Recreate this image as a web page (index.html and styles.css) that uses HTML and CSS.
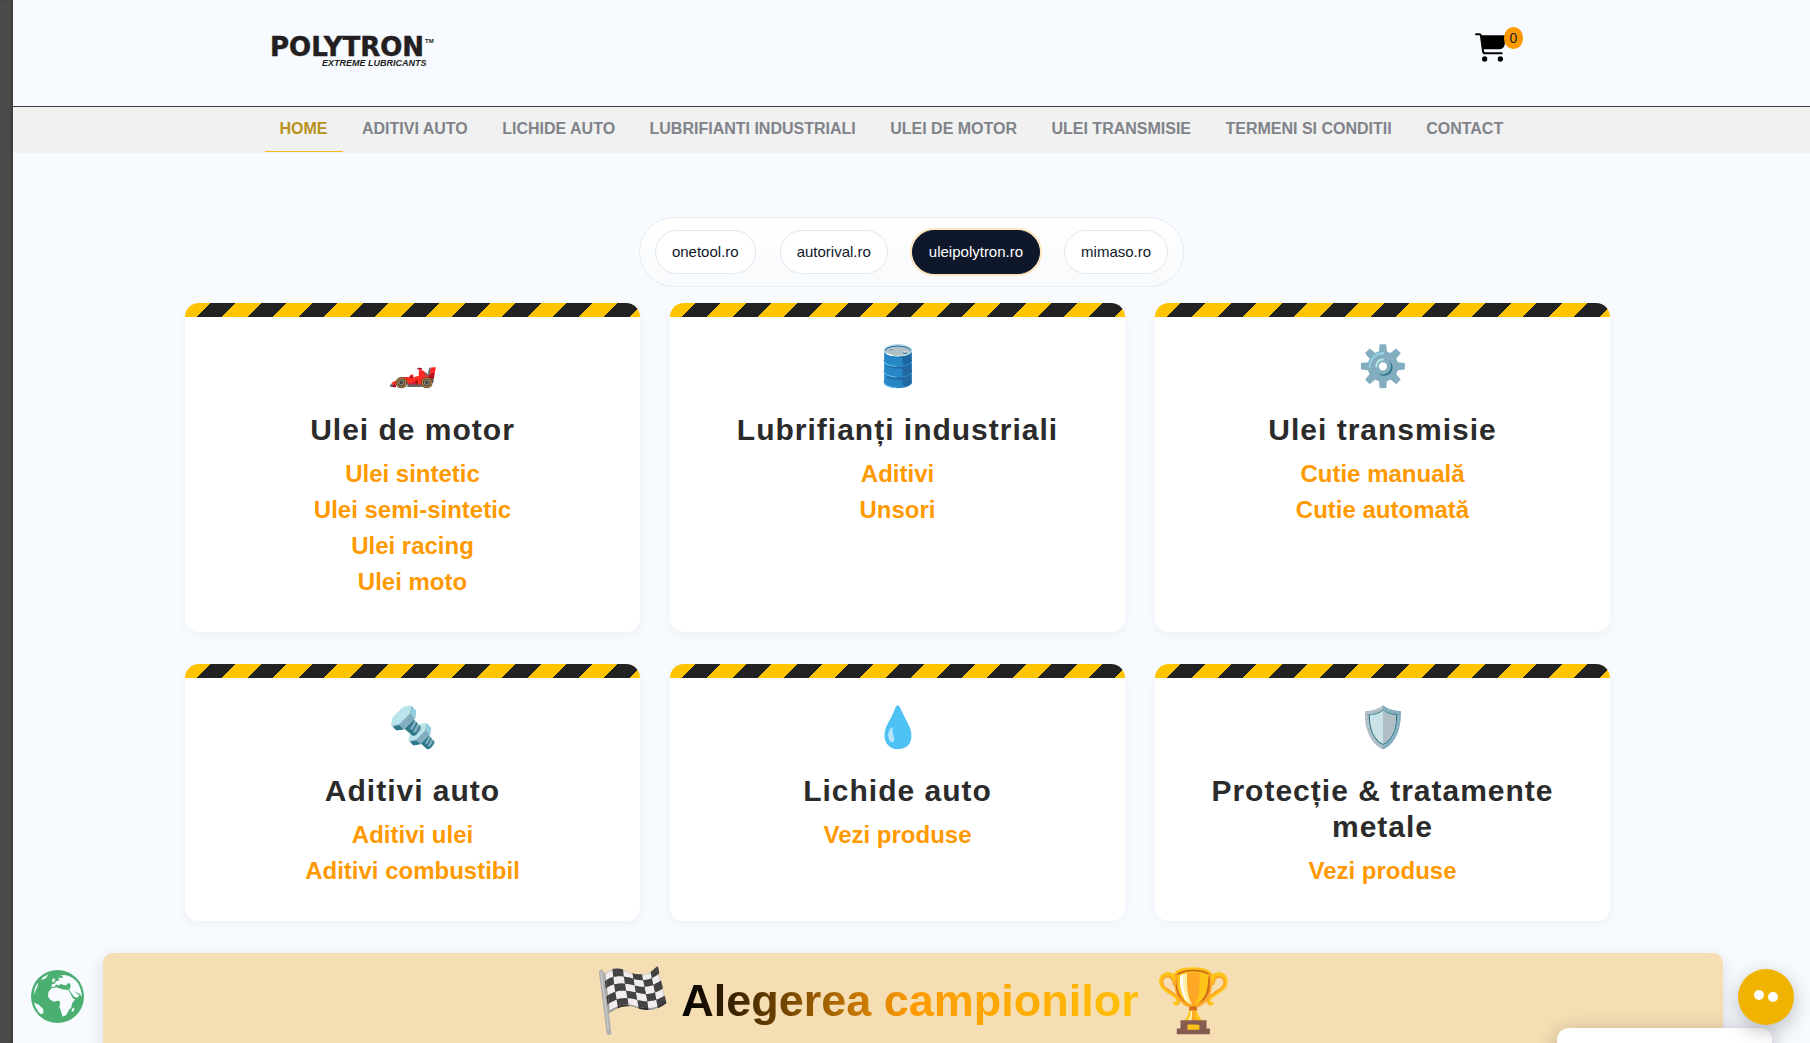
FILE: index.html
```html
<!DOCTYPE html>
<html lang="ro">
<head>
    <meta charset="UTF-8">
    <meta name="viewport" content="width=device-width, initial-scale=1.0">
    <title>Polytron - Extreme Lubricants</title>
    <link rel="stylesheet" href="styles.css">
</head>
<body>
    <div class="side-strip"></div>

    <header class="header">
        <div class="container header-row">
            <a class="logo" href="#">
                <svg width="166" height="36" viewBox="0 0 166 36" role="img" aria-label="Polytron">
                    <text class="logo-name" x="0" y="20">POLYTRON</text>
                    <text class="logo-tm" x="155" y="7">TM</text>
                    <text class="logo-sub" x="52" y="30">EXTREME LUBRICANTS</text>
                </svg>
            </a>
            <a class="cart" href="#" aria-label="Cos">
                <svg width="30" height="30" viewBox="284 98 90 90">
                    <path d="M287 102H297Q301 102 302 107L308 153Q309 159 314 159H364" fill="none" stroke="#000" stroke-width="6" stroke-linecap="round"/>
                    <path d="M301 105H375L373 134Q370 146 357 147H308Z"/>
                    <circle cx="313" cy="176" r="8"/>
                    <circle cx="360" cy="176" r="8"/>
                </svg>
                <span class="cart-count">0</span>
            </a>
        </div>
    </header>

    <nav class="nav">
        <div class="container nav-row">
            <a class="nav-link active" href="#">HOME</a>
            <a class="nav-link" href="#">ADITIVI AUTO</a>
            <a class="nav-link" href="#">LICHIDE AUTO</a>
            <a class="nav-link" href="#">LUBRIFIANTI INDUSTRIALI</a>
            <a class="nav-link" href="#">ULEI DE MOTOR</a>
            <a class="nav-link" href="#">ULEI TRANSMISIE</a>
            <a class="nav-link" href="#">TERMENI SI CONDITII</a>
            <a class="nav-link" href="#">CONTACT</a>
        </div>
    </nav>

    <main>
        <div class="sites-wrap">
            <div class="sites">
                <a class="site" href="#">onetool.ro</a>
                <a class="site" href="#">autorival.ro</a>
                <a class="site active" href="#">uleipolytron.ro</a>
                <a class="site" href="#">mimaso.ro</a>
            </div>
        </div>

        <section class="cards">
            <div class="card">
                <div class="card-icon">🏎️</div>
                <h2>Ulei de motor</h2>
                <a href="#">Ulei sintetic</a>
                <a href="#">Ulei semi-sintetic</a>
                <a href="#">Ulei racing</a>
                <a href="#">Ulei moto</a>
            </div>
            <div class="card">
                <div class="card-icon">🛢️</div>
                <h2>Lubrifianți industriali</h2>
                <a href="#">Aditivi</a>
                <a href="#">Unsori</a>
            </div>
            <div class="card">
                <div class="card-icon">⚙️</div>
                <h2>Ulei transmisie</h2>
                <a href="#">Cutie manuală</a>
                <a href="#">Cutie automată</a>
            </div>
            <div class="card">
                <div class="card-icon">🔩</div>
                <h2>Aditivi auto</h2>
                <a href="#">Aditivi ulei</a>
                <a href="#">Aditivi combustibil</a>
            </div>
            <div class="card">
                <div class="card-icon">💧</div>
                <h2>Lichide auto</h2>
                <a href="#">Vezi produse</a>
            </div>
            <div class="card">
                <div class="card-icon">🛡️</div>
                <h2>Protecție &amp; tratamente metale</h2>
                <a href="#">Vezi produse</a>
            </div>
        </section>

        <section class="banner">
            <span class="banner-icon">🏁</span>
            <h1>Alegerea campionilor</h1>
            <span class="banner-icon">🏆</span>
        </section>
    </main>

    <button class="globe" type="button" aria-label="Limba">
        <svg width="53" height="53" viewBox="92 119 160 160">
            <circle cx="172" cy="199" r="80" fill="#4caf72"/>
            <g fill="#f7faff">
                <path d="M154 170L155 162L164 160L166 154L175 151L181 150L174 147L178 142L187 144L188 138L178 136L192 134Q216 136 232 156Q243 172 246 200L238 191L229 186L223 184L232 191L238 196L231 203L222 200L211 185L207 176L212 170L210 160L203 159L198 166L190 164L182 161L175 166L168 163L162 170Z"/>
                <path d="M154 174L168 171L178 174L190 178L205 179L212 192L218 204L225 208L216 220L213 234L206 239L204 246L197 256L187 259L183 244L178 231L180 217L175 211L161 215L150 209L143 198L145 185Z"/>
                <path d="M155 150L160 143L165 147L163 153L157 156Z"/>
                <path d="M122 150L128 141L145 132L137 144Z"/>
                <path d="M102 182Q103 168 114 157L111 170L106 181L100 195Z"/>
                <path d="M101 217L115 224L129 237V250L121 252Q107 240 101 217Z"/>
                <path d="M214 242L217 235L223 232L222 241L216 246Z"/>
            </g>
        </svg>
    </button>

    <div class="chat-popup"></div>
    <button class="chat" type="button" aria-label="Chat">
        <svg width="24" height="12" viewBox="0 0 24 12">
            <circle cx="5" cy="5" r="5" fill="#fff"/>
            <circle cx="19" cy="7" r="5" fill="#fff"/>
        </svg>
    </button>
</body>
</html>
```

FILE: styles.css
```css
* {
    box-sizing: border-box;
}
body {
    margin: 0;
    padding-left: 13px;
    background: #f7faff;
    font-family: "Liberation Sans", Arial, sans-serif;
    font-size: 16px;
    line-height: 24px;
    overflow: hidden;
}
a {
    text-decoration: none;
}
.side-strip {
    position: fixed;
    top: 0;
    bottom: 0;
    left: 0;
    width: 13px;
    background: #4b4b4b;
    box-shadow: inset -2px 0 3px -1px #333;
}
.container {
    max-width: 1320px;
    margin: 0 auto;
    padding: 0 13px;
}

/* header */
.header {
    border-bottom: 1px solid #3a3d42;
}
.header-row {
    display: flex;
    justify-content: space-between;
    align-items: flex-start;
    height: 106px;
    padding: 33px 67px 0 18px;
}
.logo {
    display: block;
    padding-top: 3px;
}
.logo svg {
    display: block;
    overflow: visible;
    fill: #231f20;
}
.logo-name {
    font: bold 26px "DejaVu Sans", sans-serif;
    stroke: #231f20;
    stroke-width: 0.5px;
}
.logo-tm {
    font: bold 6px "Liberation Sans", sans-serif;
}
.logo-sub {
    font: italic bold 9px "Liberation Sans", sans-serif;
}
.cart {
    position: relative;
    color: #212529;
}
.cart svg {
    display: block;
}
.cart-count {
    position: absolute;
    left: 29px;
    top: -6px;
    padding: 0 6px;
    border-radius: 50%;
    background: #ff9900;
    font-size: 14px;
    line-height: 22px;
}

/* menu */
.nav {
    background: #f1f1f1;
}
.nav-row {
    padding-bottom: 1px;
}
.nav-link {
    display: inline-block;
    padding: 10px 15px;
    border-bottom: 1px solid transparent;
    color: #808389;
    font-weight: bold;
    vertical-align: top;
}
.nav-link.active {
    color: #b8921a;
    border-bottom-color: #f5b921;
}

/* site switcher */
.sites-wrap {
    display: flex;
    justify-content: center;
    padding: 64px 0 16px;
}
.sites {
    display: flex;
    gap: 24px;
    padding: 12px 15px;
    border: 1px solid #e6ecf2;
    border-radius: 35px;
    background: linear-gradient(#ffffff, #f8fafc);
}
.site {
    padding: 10px 16px;
    border: 1px solid #e2e8f0;
    border-radius: 22px;
    background: #fff;
    color: #0f172a;
    font-size: 15px;
    line-height: 22px;
}
.site.active {
    background: #0f172a;
    border-color: #0f172a;
    color: #fff;
    box-shadow: 0 0 0 2px #fde6c0;
}

/* categories */
.cards {
    display: grid;
    grid-template-columns: repeat(3, 1fr);
    gap: 32px 30px;
    padding: 0 200px 32px 172px;
}
.card {
    position: relative;
    overflow: hidden;
    padding: 33px 32px 32px;
    border-radius: 14px;
    background: #fff;
    box-shadow: 0 4px 12px rgba(0, 0, 0, 0.04);
    text-align: center;
}
.card::before {
    content: "";
    position: absolute;
    top: 0;
    left: 0;
    right: 0;
    height: 14px;
    background: repeating-linear-gradient(135deg, #ffc400 0 18px, #222 18px 36px);
}
.card-icon {
    margin-bottom: 16px;
    font-size: 40px;
    line-height: 60px;
}
.card h2 {
    margin: 0 0 8px;
    color: #2b2b2b;
    font-size: 30px;
    line-height: 36px;
    letter-spacing: 1px;
}
.card a {
    display: block;
    color: #ff9900;
    font-size: 24px;
    line-height: 36px;
    font-weight: bold;
}

/* champions banner */
.banner {
    display: flex;
    justify-content: center;
    align-items: center;
    height: 220px;
    margin: 0 87px 0 90px;
    padding-bottom: 124px;
    border-radius: 10px;
    background: #f5deb3;
    box-shadow: 0 4px 16px rgba(0, 0, 0, 0.12);
}
.banner h1 {
    margin: 0 16px 0 10px;
    background: linear-gradient(90deg, #000, #ff9900, #ffc107);
    -webkit-background-clip: text;
    background-clip: text;
    color: transparent;
    font-size: 45px;
    line-height: 60px;
}
.banner-icon {
    font-size: 62px;
    line-height: 72px;
}

/* floating buttons */
.globe {
    position: fixed;
    left: 31px;
    bottom: 20px;
    padding: 0;
    border: 0;
    background: none;
}
.globe svg {
    display: block;
}
.chat {
    position: fixed;
    right: 16px;
    bottom: 18px;
    display: flex;
    justify-content: center;
    align-items: center;
    width: 56px;
    height: 56px;
    padding: 0 0 2px;
    border: 0;
    border-radius: 50%;
    background: #f0b400;
    box-shadow: 0 6px 20px rgba(0, 0, 0, 0.25);
}
.chat-popup {
    position: fixed;
    right: 38px;
    bottom: -65px;
    width: 215px;
    height: 80px;
    border-radius: 12px;
    background: #fff;
    box-shadow: 0 4px 20px rgba(0, 0, 0, 0.25);
}
```
